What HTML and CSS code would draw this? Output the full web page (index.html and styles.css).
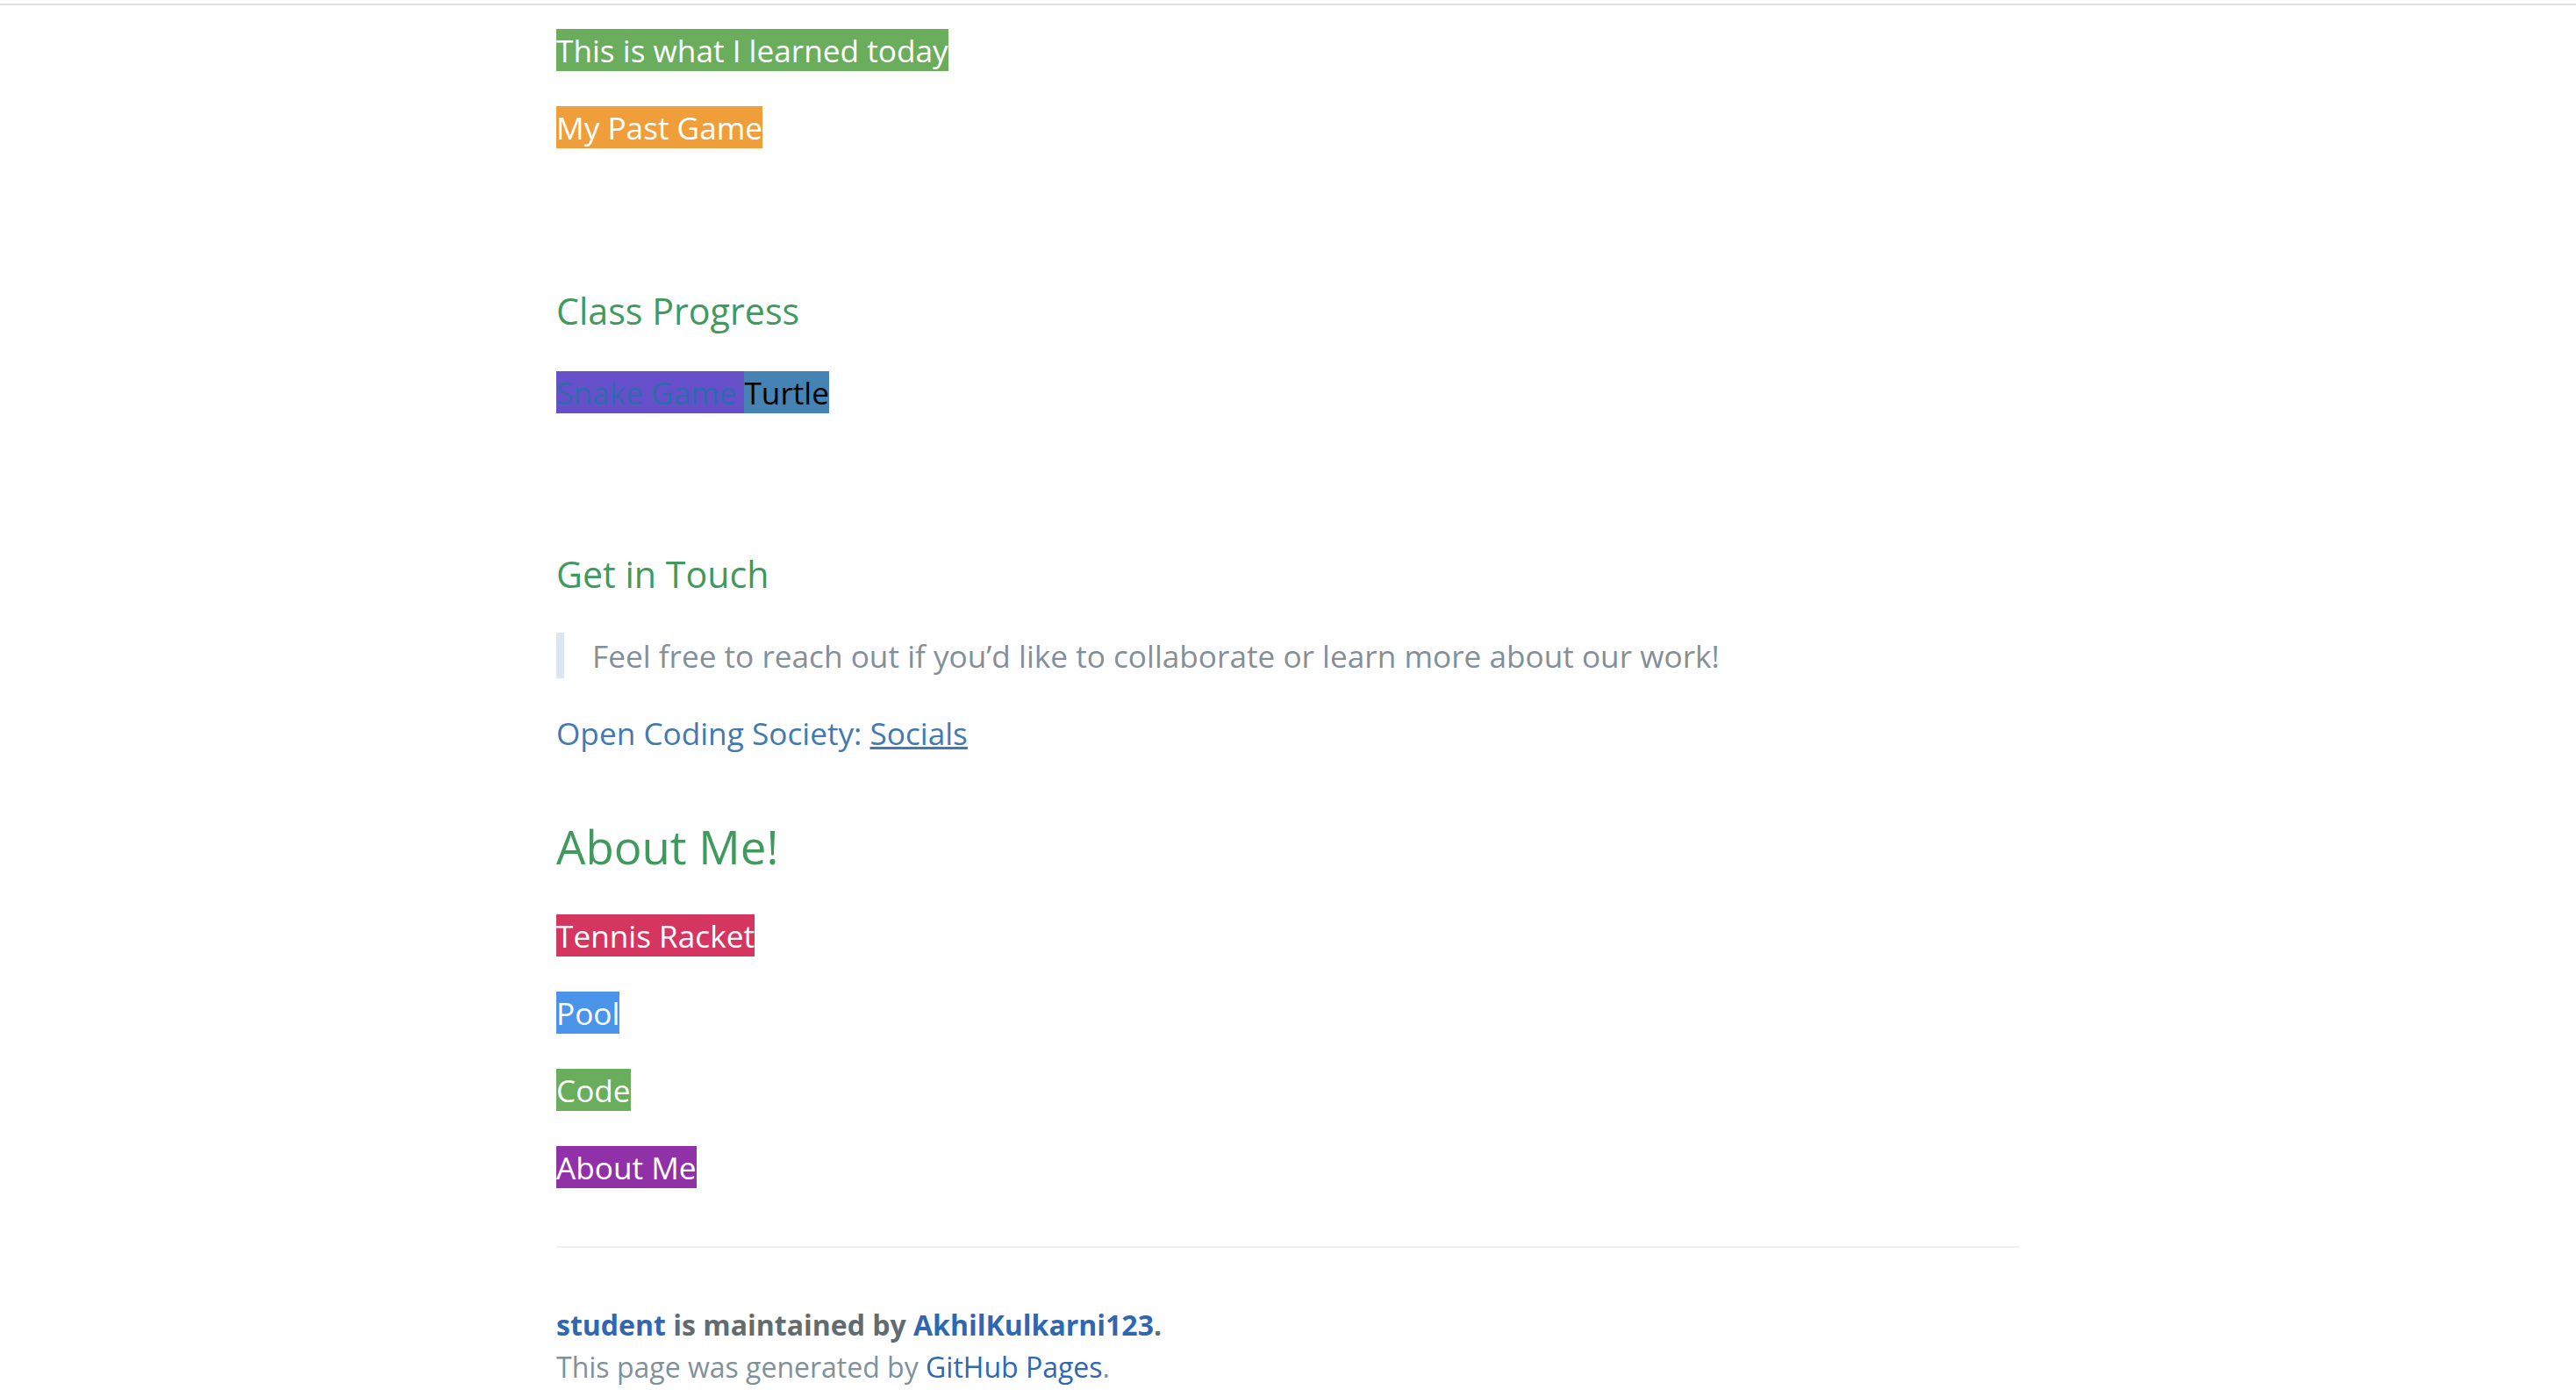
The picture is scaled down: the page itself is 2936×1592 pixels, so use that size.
FILE: index.html
```html
<!DOCTYPE html>
<html lang="en">
<head>
<meta charset="utf-8">
<title>student</title>
<link rel="stylesheet" href="styles.css">
</head>
<body>
<div class="topline"></div>
<main class="main-content">
  <p><span class="tag tag-green">This is what I learned today</span></p>
  <p><span class="tag tag-orange">My Past Game</span></p>
  <p class="spacer">&nbsp;</p>
  <h3>Class Progress</h3>
  <p><span class="tag tag-purple"><a class="snake" href="#">Snake Game</a> </span><span class="tag tag-steel">Turtle</span></p>
  <p class="spacer spacer-short">&nbsp;</p>
  <h3>Get in Touch</h3>
  <blockquote>
    <p>Feel free to reach out if you’d like to collaborate or learn more about our work!</p>
  </blockquote>
  <p class="social">Open Coding Society: <a href="#">Socials</a></p>
  <h2>About Me!</h2>
  <p><span class="tag tag-crimson">Tennis Racket</span></p>
  <p><span class="tag tag-blue">Pool</span></p>
  <p><span class="tag tag-green">Code</span></p>
  <p><span class="tag tag-violet">About Me</span></p>
  <footer class="site-footer">
    <span class="site-footer-owner"><a href="#">student</a> is maintained by <a href="#">AkhilKulkarni123</a>.</span>
    <span class="site-footer-credits">This page was generated by <a href="#">GitHub Pages</a>.</span>
  </footer>
</main>
</body>
</html>
```

FILE: styles.css
```css
html, body {
  margin: 0;
  padding: 0;
  background: #ffffff;
}

body {
  font-family: "Open Sans", "Liberation Sans", sans-serif;
  color: #606c71;
  line-height: 1.5;
}

.topline {
  margin-top: 4px;
  height: 2px;
  background: #e2e2e2;
}

.main-content {
  width: 1668px;
  margin: 0 auto;
  padding-top: 25px;
  font-size: 35.2px;
  line-height: 1.5;
}

.main-content p {
  margin: 35.2px 0;
}

.main-content > p:first-child {
  margin-top: 0;
}

.main-content .spacer-short {
  line-height: 50.8px;
}

.main-content h2,
.main-content h3 {
  margin-top: 64px;
  margin-bottom: 32px;
  font-weight: normal;
  color: #409a5e;
  line-height: 1.5;
}

.main-content h2 {
  font-size: 52.8px;
}

.main-content h3 {
  font-size: 41.2px;
}

.tag {
  color: #ffffff;
}

.tag-green { background: #6aad5d; }
.tag-orange { background: #f09e3a; }
.tag-purple { background: #6650c9; }
.tag-steel { background: #4682b4; color: #000000; }
.tag-crimson { background: #d5365f; }
.tag-blue { background: #4a94e9; }
.tag-violet { background: #9031a8; }

.snake {
  color: #2f6ab0;
  text-decoration: none;
}

blockquote {
  margin: 35.2px 0;
  padding: 0 32px;
  color: #858f98;
  border-left: 9.6px solid #dce6f0;
}

blockquote p {
  margin: 0 !important;
}

.social {
  color: #4479ae;
}

.social a {
  color: #4479ae;
  text-decoration: underline;
}

.site-footer {
  display: block;
  margin-top: 64px;
  padding-top: 64px;
  border-top: 2px solid #eff0f1;
  font-size: 32px;
  line-height: 1.5;
}

.site-footer a {
  color: #2f67b1;
  text-decoration: none;
}

.site-footer-owner {
  display: block;
  font-weight: bold;
}

.site-footer-credits {
  display: block;
  color: #819198;
}
```
